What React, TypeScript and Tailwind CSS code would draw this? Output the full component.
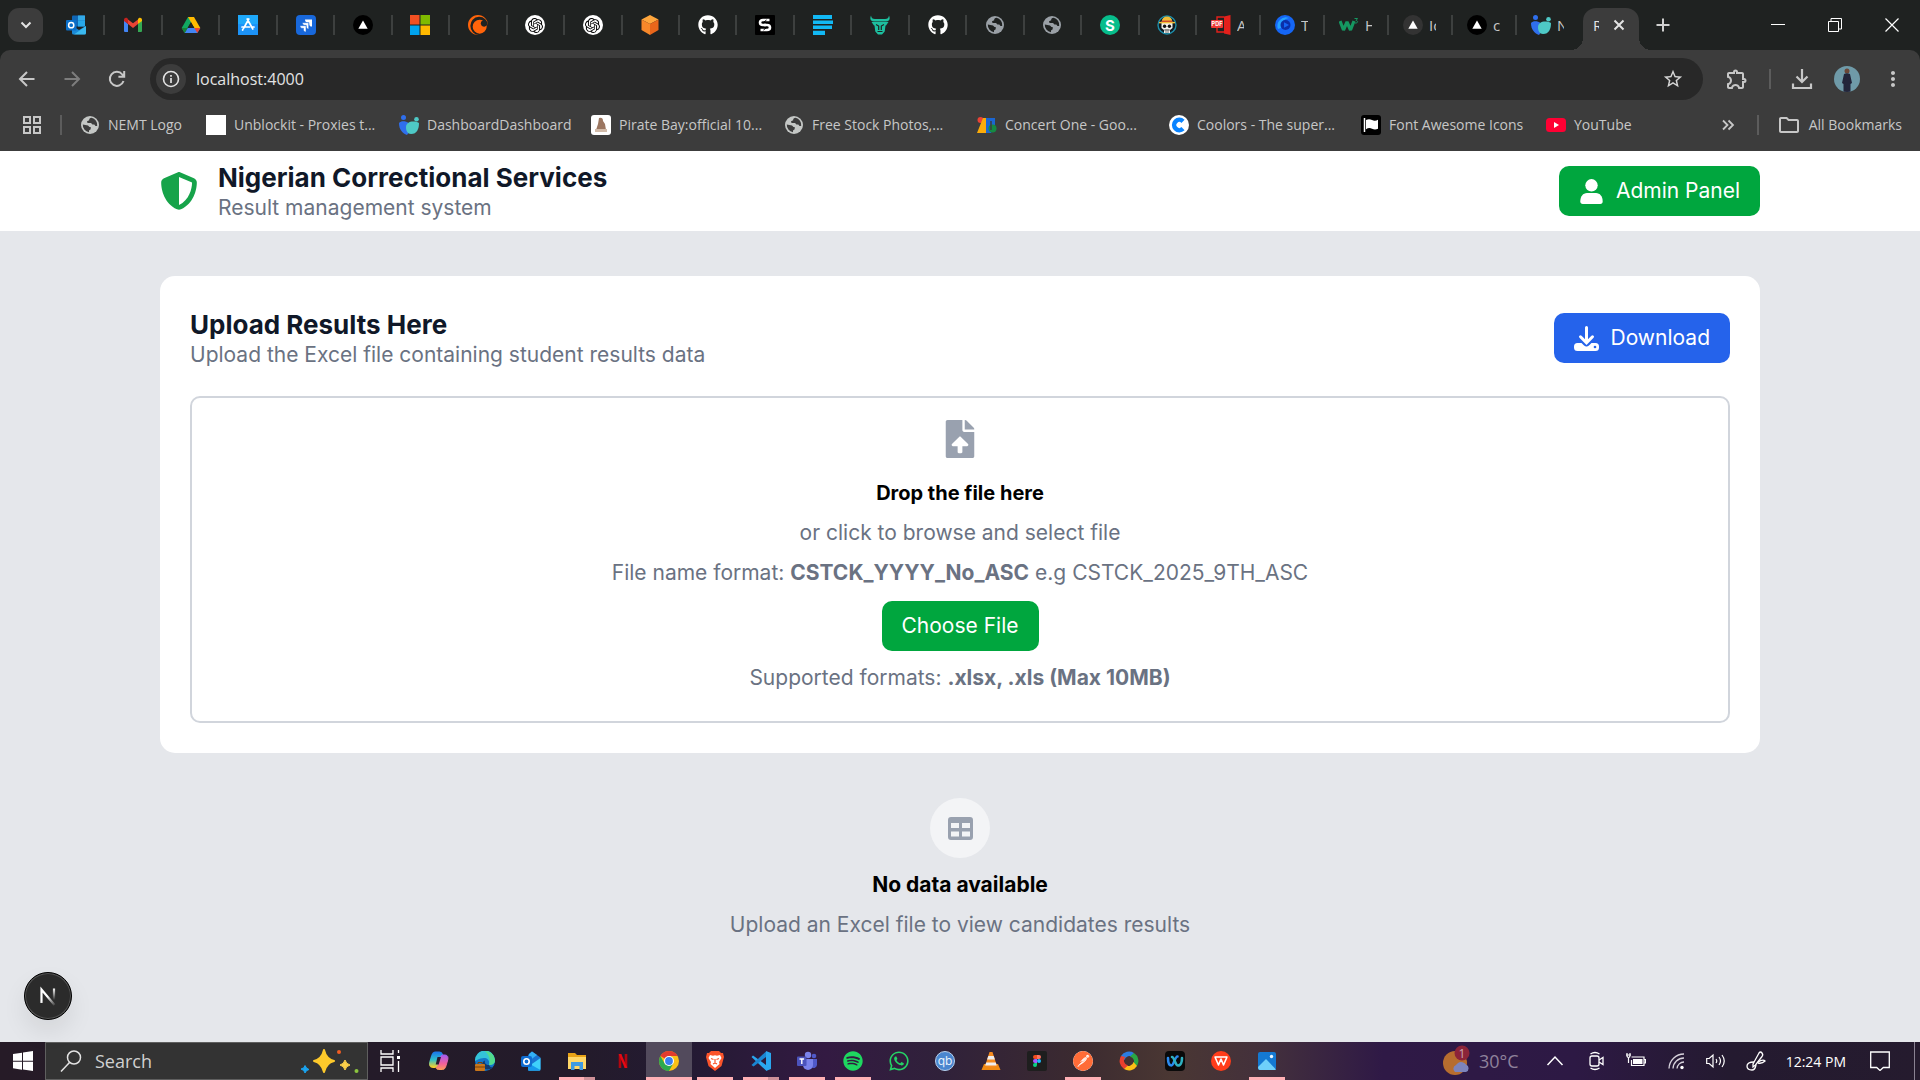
import React from "react";
import { FaGithub, FaWhatsapp, FaSpotify, FaShieldHalved } from "react-icons/fa6";
import { FaFileUpload } from "react-icons/fa";
import { MdStarOutline, MdOutlineExtension, MdMoreVert, MdOutlineFolder } from "react-icons/md";
import { SiOpenai, SiCrunchyroll, SiPostman } from "react-icons/si";

type Kids = { children: React.ReactNode };

const Svg = ({ children, box = 20, cls = "size-5" }: Kids & { box?: number; cls?: string }) => (
  <svg viewBox={`0 0 ${box} ${box}`} className={`${cls} shrink-0`} fill="none" aria-hidden="true">
    {children}
  </svg>
);

const Outlook = () => (
  <Svg>
    <rect x="6" y="0.5" width="13" height="11" rx="1" fill="#1066b5" />
    <rect x="12" y="0.5" width="7" height="5" fill="#32a9e7" />
    <rect x="12" y="5.5" width="7" height="6" fill="#28a8ea" />
    <path d="M6 11 13 15 20 11V18a1.500 1.500 0 0 1-1.500 1.500H7.500A1.500 1.500 0 0 1 6 18Z" fill="#1b8ad8" />
    <path d="M20 11 8 19.500h10.500A1.500 1.500 0 0 0 20 18Z" fill="#50d9ff" opacity=".6" />
    <rect x="0" y="5" width="10.500" height="10.500" rx="1" fill="#0a6fc9" />
    <circle cx="5.200" cy="10.200" r="2.600" stroke="#fff" strokeWidth="1.500" />
  </Svg>
);
const NewOutlook = () => (
  <Svg>
    <path d="m11 .5 8.500 6V18a1.500 1.500 0 0 1-1.500 1.500H7V4Z" fill="#1a73d0" />
    <path d="m11 .5 5 3.500-8 6V3Z" fill="#33b1f5" />
    <path d="M19.500 7 8 15v4.500h10a1.500 1.500 0 0 0 1.500-1.500Z" fill="#3fd0fb" />
    <path d="m7 12 12.500 7q-.5.500-1.500.500H7Z" fill="#1698ec" />
    <rect x="0" y="5" width="11" height="11" rx="2" fill="#0f6cd0" />
    <circle cx="5.500" cy="10.500" r="2.700" stroke="#fff" strokeWidth="1.600" />
  </Svg>
);
const Gmail = () => (
  <Svg>
    <path d="M1 4.500V16a1 1 0 0 0 1 1h3V9Z" fill="#4285f4" />
    <path d="M19 4.500V16a1 1 0 0 1-1 1h-3V9Z" fill="#34a853" />
    <path d="M5 9V4.500L10 8.300 15 4.500V9L10 13Z" fill="#ea4335" />
    <path d="M1 5.500V4.800C1 3 3 2.300 4.300 3.300L5 4v5L1 6Z" fill="#c5221f" />
    <path d="M19 5.500v-.7C19 3 17 2.300 15.700 3.300L15 4v5l4-3Z" fill="#fbbc04" />
  </Svg>
);
const Drive = () => (
  <Svg>
    <path d="M7 2h6l-9.300 16L.7 13Z" fill="#11a861" />
    <path d="M7 2h6l6.300 11h-6Z" fill="#ffba00" />
    <path d="M3.700 18 6.600 13h12.700l-3 5Z" fill="#4285f4" />
    <path d="M10 7.200 6.600 13h6.700Z" fill="#1f2221" />
    <path d="m13.300 13 3 5 3-5Z" fill="#ea4335" />
    <path d="m.7 13 3 5 2.900-5Z" fill="#188038" />
  </Svg>
);
const AppStore = () => (
  <Svg>
    <rect width="20" height="20" fill="#1c93f7" />
    <rect width="20" height="9" fill="#1fb6fb" opacity=".6" />
    <path d="m10.800 4-5 9M9.200 4l5.600 10M4 12h7.500M13.500 12H16M5 14.200l-.4.800" stroke="#fff" strokeWidth="1.700" strokeLinecap="round" />
  </Svg>
);
const Jira = () => (
  <Svg>
    <rect width="20" height="20" rx="4" fill="#1868db" />
    <path d="M9 4.500h7v7c-1.800 0-2.800-1-2.800-2.600v-1.400h-1.500C10 7.500 9 6.200 9 4.500Z" fill="#fff" />
    <path d="M6.400 7.700h6.300v6.300c-1.600 0-2.500-1-2.500-2.400v-1.300H8.900c-1.500 0-2.500-1.100-2.500-2.600Z" fill="#fff" stroke="#1868db" strokeWidth=".5" />
    <path d="M4 10.700h6V17c-1.600 0-2.500-1-2.500-2.400v-1.300H6.400C5 13.300 4 12.200 4 10.700Z" fill="#fff" stroke="#1868db" strokeWidth=".5" />
  </Svg>
);
const Vercel = ({ bg = "#000" }: { bg?: string }) => (
  <Svg>
    <circle cx="10" cy="10" r="10" fill={bg} />
    <path d="M10 5.500 14.700 13.700H5.300Z" fill="#fff" />
  </Svg>
);
const Microsoft = () => (
  <Svg>
    <path d="M0 0h9.500v9.500H0Z" fill="#f25022" />
    <path d="M10.500 0H20v9.500h-9.500Z" fill="#7fba00" />
    <path d="M0 10.500h9.500V20H0Z" fill="#00a4ef" />
    <path d="M10.500 10.500H20V20h-9.500Z" fill="#ffb900" />
  </Svg>
);
const OpenAi = () => (
  <span className="flex size-5 items-center justify-center rounded-full bg-white">
    <SiOpenai className="size-[15px] text-black" />
  </span>
);
const Box = () => (
  <Svg>
    <path d="m10 0 8.500 4.500L10 9 1.500 4.500Z" fill="#ffa63d" />
    <path d="M1.500 4.500 10 9v11l-8.500-5Z" fill="#f7882a" />
    <path d="M18.500 4.500 10 9v11l8.500-5Z" fill="#e8661b" />
  </Svg>
);
const Knot = () => (
  <Svg>
    <rect width="20" height="20" rx="1" fill="#000" />
    <path d="M14.500 5H8Q5 5 5 7.500T8 10h3" stroke="#fff" strokeWidth="2.600" />
    <path d="M5.500 15H12q3 0 3-2.500T12 10H9" stroke="#fff" strokeWidth="2.600" />
    <path d="m8.500 7.500 3-2.500M8.500 15l3-2.500" stroke="#000" strokeWidth="1" />
  </Svg>
);
const Bars = () => (
  <Svg>
    <path d="M0 0h19v4H0ZM0 5.500h20v3.500H0ZM0 10.500h19v3.500H0ZM0 15.700h12V20H0Z" fill="#12b9f5" />
  </Svg>
);
const Bull = () => (
  <Svg>
    <path d="M1 .5C-.5 4 .5 6.500 4 6.500h12C19.500 6.500 20.500 4 19 .500c-.3 2.500-1.500 3.500-4 3.500H5C2.500 4 1.300 3 1 .5ZM1.500 7 4 10.500h.5l.8 6L8 19.500h4l2.700-3 .8-6h.5L18.500 7Z" fill="#1dbf9f" />
    <path d="M6 9.500 8.700 11v4M14 9.500 11.300 11v4M7.500 16.500h5" stroke="#1f2221" strokeWidth="1.200" />
  </Svg>
);
const LetterDisc = () => (
  <Svg>
    <circle cx="10" cy="10" r="10" fill="#07bd8b" />
    <text x="10" y="15.500" textAnchor="middle" fontSize="15" fontWeight="700" fill="#fff" fontFamily="Inter, sans-serif">S</text>
  </Svg>
);
const Pirate = () => (
  <Svg>
    <circle cx="10" cy="10" r="9" fill="#101a20" stroke="#1d8ca8" strokeWidth="1.400" />
    <path d="M4.500 8a5.500 6 0 0 1 11 0v5l-2.500 2v3H7v-3l-2.500-2Z" fill="#f2f2ee" />
    <path d="M5 6a5 4.500 0 0 1 10 0Z" fill="#f0bd38" />
    <path d="M4.800 5.600h10.400v2H4.800Z" fill="#c9382b" />
    <path d="M2 7.600h16" stroke="#f0bd38" strokeWidth="1.500" />
    <circle cx="7.600" cy="11.200" r="1.700" fill="#111" />
    <circle cx="12.400" cy="11.200" r="1.700" fill="#111" />
    <path d="M7 15h6M9 14v4M11 14v4" stroke="#555" strokeWidth=".8" />
  </Svg>
);
const Pdf = () => (
  <Svg>
    <path d="M13 1.500 19.500 0v20L13 18.500Z" fill="#e3201b" />
    <path d="M6 5V2h7M6 13v4h7" stroke="#e3201b" strokeWidth="1.400" />
    <rect x="0" y="5" width="12" height="8" rx="1" fill="#ef3a36" />
    <text x="6" y="11.200" textAnchor="middle" fontSize="5.500" fontWeight="700" fill="#fff" fontFamily="Inter, sans-serif">PDF</text>
  </Svg>
);
const BlueDisc = () => (
  <Svg>
    <circle cx="10" cy="10" r="10" fill="#1566f5" />
    <path d="M3 14A8.500 8.500 0 0 1 14 3a9 9 0 0 0-8 10Z" fill="#25a2ff" />
    <circle cx="10.500" cy="10" r="5" fill="#0b2fa8" />
    <path d="m9 7.300 5 2.700-5 2.700Z" fill="#1566f5" />
  </Svg>
);
const W3 = () => (
  <Svg>
    <path d="m1 6 3.500 9L8 7l3.500 8L15 6" stroke="#159761" strokeWidth="3.200" strokeLinejoin="bevel" />
    <path d="M15.500 3.500h3L17 5.500c2.500.200 2 3-1 2.500" stroke="#159761" strokeWidth="1" />
  </Svg>
);
const Twins = () => (
  <Svg>
    <circle cx="4.500" cy="2.500" r="2.500" fill="#2f6fed" />
    <circle cx="17.500" cy="4.300" r="2.300" fill="#4ec9c6" />
    <path d="M0 8c2-2.500 7-2 9.500 0L11 16l-3 4C3 18 0 14 0 8Z" fill="#2f6fed" />
    <path d="M7 12c0-5 7-7 13-4 0 6-2 11-8 11-3.500 0-5-3-5-7Z" fill="#4ec9c6" />
  </Svg>
);
const Globe = ({ tone = "#9aa0a6", ground = "#1f2221" }: { tone?: string; ground?: string }) => (
  <Svg>
    <circle cx="10" cy="10" r="9" fill={tone} />
    <path d="M11.500 2.800C10 3 9 3.800 9.200 5.200L7 6.200 7.500 8H11l1.500 1.500h1.800L15.500 11h1.700a7.300 7.300 0 0 0-5.700-8.200Z" fill={ground} />
    <path d="M2.800 9.500 8 10.500 9.500 12h1.200v2.200L9 15.500v1.700A7.300 7.300 0 0 1 2.800 9.500Z" fill={ground} />
  </Svg>
);

const iconTabs: [string, React.ReactNode][] = [
  ["Outlook", <Outlook />],
  ["Gmail", <Gmail />],
  ["Drive", <Drive />],
  ["App Store", <AppStore />],
  ["Jira", <Jira />],
  ["Vercel", <Vercel />],
  ["Microsoft", <Microsoft />],
  ["Crunchyroll", <SiCrunchyroll className="size-5 text-[#ff640a]" />],
  ["ChatGPT", <OpenAi />],
  ["ChatGPT", <OpenAi />],
  ["Packages", <Box />],
  ["GitHub", <FaGithub className="size-5 text-white" />],
  ["Knot", <Knot />],
  ["Bars", <Bars />],
  ["Bull", <Bull />],
  ["GitHub", <FaGithub className="size-5 text-white" />],
  ["Site", <Globe />],
  ["Site", <Globe />],
  ["S", <LetterDisc />],
  ["Pirate", <Pirate />],
];

const textTabs: [string, React.ReactNode][] = [
  ["A", <Pdf />],
  ["T", <BlueDisc />],
  ["H", <W3 />],
  ["Ic", <Vercel bg="#333" />],
  ["c", <Vercel />],
  ["N", <Twins />],
];

function TabStrip() {
  return (
    <div className="flex h-[50px] items-center bg-[#1f2221]">
      <button aria-label="Search tabs" className="mr-[5px] ml-2 flex h-[34px] w-[35px] items-center justify-center rounded-[11px] bg-[#3c3c3c]">
        <Svg cls="size-5"><path d="m5.500 7.500 4.500 4.500 4.500-4.500" stroke="#e3e3e3" strokeWidth="2" /></Svg>
      </button>
      <div className="flex min-w-0 flex-1">
        {iconTabs.map(([name, icon], i) => (
          <button key={i} aria-label={name} className="flex h-5 min-w-0 flex-1 items-center justify-center border-r-2 border-[#3d403f]">
            {icon}
          </button>
        ))}
      </div>
      {textTabs.map(([name, icon], i) => (
        <button key={i} className={`flex h-5 w-16 shrink-0 items-center gap-1.5 pl-3.5 text-[15px] text-[#c7c7c7] ${i < 5 ? "border-r-2 border-[#3d403f]" : ""}`}>
          {icon}
          <span className="w-[7px] overflow-hidden text-left whitespace-nowrap">{name}</span>
        </button>
      ))}
      <div className="relative mt-2 ml-0.5 flex h-[42px] w-14 shrink-0 items-center gap-3.5 rounded-t-[13px] bg-[#3c3c3c] pb-2 pl-[10px] text-[15px] text-[#e3e3e3]">
        <span className="absolute bottom-0 -left-3 size-3 bg-[radial-gradient(circle_at_0_0,#1f2221_12px,#3c3c3c_12px)]" />
        <span className="absolute -right-3 bottom-0 size-3 bg-[radial-gradient(circle_at_100%_0,#1f2221_12px,#3c3c3c_12px)]" />
        <span className="w-[6px] overflow-hidden">R</span>
        <button aria-label="Close tab">
          <Svg box={12} cls="size-3"><path d="m1.500 1.500 9 9m0-9-9 9" stroke="#e3e3e3" strokeWidth="2" /></Svg>
        </button>
      </div>
      <button aria-label="New tab" className="ml-4 shrink-0">
        <Svg box={16} cls="size-4"><path d="M8 1.500v13M1.500 8h13" stroke="#d0d0d0" strokeWidth="2" /></Svg>
      </button>
      <div className="ml-[78px] flex shrink-0 items-center">
        <button aria-label="Minimize" className="flex w-[57px] justify-center">
          <Svg box={14} cls="size-3.5"><path d="M0 6.500h14" stroke="#fff" /></Svg>
        </button>
        <button aria-label="Restore" className="flex w-[57px] justify-center">
          <Svg box={14} cls="size-3.5"><path d="M.5 3.500h10v10H.5ZM3 3.500v-3h10.500V11h-3" stroke="#fff" /></Svg>
        </button>
        <button aria-label="Close" className="flex w-[57px] justify-center">
          <Svg box={14} cls="size-3.5"><path d="m.5.5 13 13m0-13-13 13" stroke="#fff" strokeWidth="1.200" /></Svg>
        </button>
      </div>
    </div>
  );
}

function Toolbar() {
  return (
    <div className="flex h-[58px] items-center pr-[15px] pl-[17px]">
      <button aria-label="Back" className="mr-[25px]">
        <Svg><path d="M17.500 10H3m7-7-7 7 7 7" stroke="#c7c7c7" strokeWidth="2" /></Svg>
      </button>
      <button aria-label="Forward" className="mr-[25px]">
        <Svg><path d="M2.500 10H17m-7-7 7 7-7 7" stroke="#7d7d7d" strokeWidth="2" /></Svg>
      </button>
      <button aria-label="Reload" className="mr-[23px]">
        <Svg><path d="M16.500 12a7 7 0 1 1-1.200-6.500L17 7.500M17.200 2v5.800h-5.800" stroke="#c7c7c7" strokeWidth="2" /></Svg>
      </button>
      <div className="flex h-[42px] flex-1 items-center rounded-full bg-[#282828] pr-[19px] pl-1.5">
        <button aria-label="Site information" className="mr-2.5 flex size-[30px] items-center justify-center rounded-full bg-[#3c3c3c]">
          <Svg>
            <circle cx="10" cy="10" r="7.500" stroke="#e3e3e3" strokeWidth="1.600" />
            <path d="M10 9v5M10 6v1.700" stroke="#e3e3e3" strokeWidth="1.700" />
          </Svg>
        </button>
        <input aria-label="Address" defaultValue="localhost:4000" className="min-w-0 flex-1 bg-transparent text-[16px] text-[#e3e3e3] outline-none" />
        <button aria-label="Bookmark this tab"><MdStarOutline className="size-[22px] text-[#d5d5d5]" /></button>
      </div>
      <button aria-label="Extensions" className="ml-[22px]"><MdOutlineExtension className="size-6 text-[#c7c7c7]" /></button>
      <span className="mx-5 h-5 w-0.5 bg-[#5c5c5c]" />
      <button aria-label="Downloads">
        <Svg box={22} cls="size-[22px]"><path d="M11 1v13m-5.500-5.500L11 14l5.500-5.500M2 15.500V20h18v-4.500" stroke="#c7c7c7" strokeWidth="2.200" /></Svg>
      </button>
      <button aria-label="Profile" className="mx-[21px]">
        <Svg box={26} cls="size-[26px] rounded-full">
          <rect width="26" height="26" fill="#6f9aa8" />
          <circle cx="13" cy="5" r="2.500" fill="#6b4636" />
          <path d="M10 8q3-1.500 6 0l2 9-1.500 1v8H9.500v-8L8 17Z" fill="#23253a" />
        </Svg>
      </button>
      <button aria-label="Menu"><MdMoreVert className="size-6 text-[#c7c7c7]" /></button>
    </div>
  );
}

const bookmarks: [string, React.ReactNode, string][] = [
  ["NEMT Logo", <Globe tone="#c4c7c5" ground="#3c3c3c" />, "w-[126px]"],
  ["Unblockit - Proxies t...", <span className="size-5 shrink-0 bg-white" />, "w-[193px]"],
  ["DashboardDashboard", <Twins />, "w-[192px]"],
  ["Pirate Bay:official 10...", <Svg><rect width="20" height="20" rx="3" fill="#fff" /><path d="M8 3q4-1 4 3l2 3 1 6H5l2-6Z" fill="#9b7660" /><path d="M4 14h12v3H4Z" fill="#d2bba9" /></Svg>, "w-[193px]"],
  ["Free Stock Photos,...", <Globe tone="#c4c7c5" ground="#3c3c3c" />, "w-[193px]"],
  ["Concert One - Goo...", <Svg><circle cx="3.500" cy="5" r="3" fill="#ea4335" /><path d="M6 18H0L6 3h4v15Z" fill="#fbab09" /><path d="M9 3h9v7l-4 8H9Z" fill="#1b66d2" /><circle cx="15.500" cy="13.500" r="4" fill="#158a43" /><path d="M14 6v9" stroke="#3c3c3c" strokeWidth="1.500" /></Svg>, "w-[192px]"],
  ["Coolors - The super...", <Svg><circle cx="10" cy="10" r="10" fill="#fff" /><path d="M14 6.300a5.200 5.200 0 1 0 0 7.400" stroke="#0a84ff" strokeWidth="4.500" /></Svg>, "w-[192px]"],
  ["Font Awesome Icons", <span className="flex size-5 shrink-0 items-center justify-center rounded-[3px] bg-black"><Svg box={16} cls="size-4"><path d="M1.500 1v14" stroke="#fff" strokeWidth="1.500" /><path d="M3 3q3-1.500 6 0t6-.3v9q-3 1.500-6 0t-6 .5Z" fill="#fff" /></Svg></span>, "w-[185px]"],
  ["YouTube", <Svg><rect y="3" width="20" height="14" rx="3.500" fill="#ff0033" /><path d="m8 7 5 3-5 3Z" fill="#fff" /></Svg>, "w-[120px]"],
];

function Bookmarks() {
  return (
    <nav className="flex h-[43px] items-center pr-[18px] pb-2.5 pl-[22px] text-[14px] text-[#c7c7c7]">
      <button aria-label="Apps">
        <Svg><path d="M2 2h6v6H2ZM12 2h6v6h-6ZM2 12h6v6H2ZM12 12h6v6h-6Z" stroke="#c7c7c7" strokeWidth="2" /></Svg>
      </button>
      <span className="mr-[18px] ml-[18px] h-5 w-0.5 shrink-0 bg-[#5c5c5c]" />
      <div className="flex min-w-0 flex-1 overflow-hidden">
        {bookmarks.map(([name, icon, width]) => (
          <a key={name} href="#" className={`flex shrink-0 items-center gap-2 whitespace-nowrap ${width}`}>
            {icon}
            {name}
          </a>
        ))}
      </div>
      <button aria-label="More bookmarks">
        <Svg box={14} cls="size-3.5"><path d="m2 2.500 4.500 4.500L2 11.500m5.500-9L12 7l-4.500 4.500" stroke="#c7c7c7" strokeWidth="1.800" /></Svg>
      </button>
      <span className="mr-[18px] ml-[22px] h-5 w-0.5 shrink-0 bg-[#5c5c5c]" />
      <a href="#" className="flex shrink-0 items-center gap-2 whitespace-nowrap">
        <MdOutlineFolder className="size-6" />
        All Bookmarks
      </a>
    </nav>
  );
}

function SiteHeader() {
  return (
    <header className="bg-white px-40">
      <div className="mx-auto flex h-20 max-w-[1600px] items-center justify-between">
        <div className="flex items-center gap-5">
          <FaShieldHalved className="size-[38px] text-[#16a34a]" />
          <div className="pt-1">
            <h1 className="text-[26px] leading-[30px] font-bold text-[#101828]">Nigerian Correctional Services</h1>
            <p className="text-[21px] leading-[30px] text-[#6a7282]">Result management system</p>
          </div>
        </div>
        <button className="flex h-[50px] items-center gap-3 rounded-[10px] bg-[#00a63e] px-5 text-[21px] text-white">
          <Svg box={25} cls="size-[25px]">
            <circle cx="12.500" cy="6.300" r="6.200" fill="#fff" />
            <path d="M1.300 22.500C1.300 17.500 4 14 8 14h9c4 0 6.700 3.500 6.700 8.500 0 1.500-.9 2.500-2.400 2.500H3.700c-1.500 0-2.400-1-2.400-2.500Z" fill="#fff" />
          </Svg>
          Admin Panel
        </button>
      </div>
    </header>
  );
}

function UploadCard() {
  return (
    <section className="mx-auto max-w-[1600px] rounded-[15px] bg-white p-[30px]">
      <div className="flex items-center justify-between pb-[26px]">
        <div className="pt-1">
          <h2 className="text-[26px] leading-[30px] font-bold text-[#101828]">Upload Results Here</h2>
          <p className="text-[21px] leading-[30px] text-[#6a7282]">Upload the Excel file containing student results data</p>
        </div>
        <button className="flex h-[50px] items-center gap-3 rounded-[10px] bg-[#2563eb] px-5 text-[21px] text-white">
          <Svg box={25} cls="size-[25px]">
            <path d="M3.500 17h4l2.300 2.200a3.900 3.900 0 0 0 5.400 0l2.300-2.200h4A3.500 3.500 0 0 1 25 20.500v1A3.500 3.500 0 0 1 21.500 25h-18A3.500 3.500 0 0 1 0 21.500v-1A3.500 3.500 0 0 1 3.500 17Z" fill="#fff" />
            <path d="M12.500 1.500v15m-6-5.700 6 6 6-6" stroke="#2563eb" strokeWidth="5" strokeLinecap="round" />
            <path d="M12.500 1.500v15m-6-5.700 6 6 6-6" stroke="#fff" strokeWidth="3" strokeLinecap="round" />
            <circle cx="21" cy="21" r="1.300" fill="#2563eb" />
          </Svg>
          Download
        </button>
      </div>
      <div className="flex flex-col items-center rounded-[10px] border-2 border-gray-300 px-5 pt-[22px] pb-7 text-center text-[21px] leading-[30px] text-[#6a7282]">
        <FaFileUpload className="mb-5 size-[38px] text-[#99a1af]" />
        <h3 className="mb-2.5 text-[20px] font-bold text-black">Drop the file here</h3>
        <p className="mb-2.5">or click to browse and select file</p>
        <p className="mb-[13px]">
          File name format: <strong>CSTCK_YYYY_No_ASC</strong> e.g CSTCK_2025_9TH_ASC
        </p>
        <button className="mb-3 h-[50px] rounded-[10px] bg-[#00a63e] px-5 text-white">Choose File</button>
        <p>
          Supported formats: <strong>.xlsx, .xls (Max 10MB)</strong>
        </p>
      </div>
    </section>
  );
}

function EmptyState() {
  return (
    <section className="mt-[45px] flex flex-col items-center text-center text-[21px] leading-[30px]">
      <div className="mb-3 flex size-[60px] items-center justify-center rounded-full bg-gray-100">
        <Svg box={25} cls="size-[25px]">
          <path fillRule="evenodd" d="M3 1h19a3 3 0 0 1 3 3v17a3 3 0 0 1-3 3H3a3 3 0 0 1-3-3V4a3 3 0 0 1 3-3ZM3 7v5h8V7Zm11 0v5h8V7ZM3 15.500v5h8v-5Zm11 0v5h8v-5Z" fill="#99a1af" />
        </Svg>
      </div>
      <h3 className="mb-2.5 font-bold text-black">No data available</h3>
      <p className="text-[#6a7282]">Upload an Excel file to view candidates results</p>
    </section>
  );
}

const TaskView = () => (
  <Svg box={22} cls="size-[22px]">
    <path d="M2 0v4h12V0M2 22v-4h12v4M2 7h12v8H2ZM19.500 0v3M19.500 11v11" stroke="#fff" strokeWidth="1.300" />
    <path d="M18 6h3v3h-3Z" fill="#fff" />
  </Svg>
);
const Copilot = () => (
  <Svg>
    <defs>
      <linearGradient id="pilot-a" x1="0" y1="0" x2="0" y2="1">
        <stop stopColor="#1b7bea" />
        <stop offset=".5" stopColor="#2fc0c8" />
        <stop offset="1" stopColor="#f2cf2e" />
      </linearGradient>
      <linearGradient id="pilot-b" x1="0" y1="0" x2="0" y2="1">
        <stop stopColor="#a25cf0" />
        <stop offset=".6" stopColor="#f2609a" />
        <stop offset="1" stopColor="#fb9a5c" />
      </linearGradient>
    </defs>
    <path d="M13 3.500C12.600 2.200 12 1.500 10.500 1.500H6.500C4.500 1.500 3.700 3 3 5.200L1.300 11c-.8 3 .2 5 2.700 5h2c1.500 0 2-.7 2.500-2.200L10.500 7c.5-2 1-3 2.500-3.500Z" stroke="url(#pilot-a)" strokeWidth="2" fill="url(#pilot-a)" />
    <path d="M7 16.500c.4 1.300 1 2 2.500 2h4c2 0 2.800-1.500 3.500-3.700L18.700 9c.8-3-.2-5-2.700-5h-2c-1.500 0-2 .7-2.500 2.200L9.500 13c-.5 2-1 3-2.500 3.500Z" fill="url(#pilot-b)" stroke="url(#pilot-b)" />
    <path d="m8.500 6-1.800 7.500h3L12 6Z" fill="#2a1a30" />
  </Svg>
);
const Edge = () => (
  <Svg>
    <circle cx="10" cy="10" r="10" fill="#1476c8" />
    <path d="M0 10a10 10 0 0 1 20-1c0 4-3 5-6 5 1-4-1-7-5-7-5 0-8 3-9 3Z" fill="#34c3d8" />
    <path d="M10 0a10 10 0 0 1 10 9c0 4-3 5-6 5 2-5 0-10-4-14Z" fill="#52dc8c" />
    <path d="M14 14c-3 0-5-2-4-4.500-3 1-4 5-1 8 2.500 1.500 6 1.500 9-1.500-1.500.5-3 .5-4-2Z" fill="#123a6b" />
    <rect x="0" y="13" width="10" height="7" rx="1" fill="#c9761a" />
    <path d="M3 13v-1.500h4V13M0 16h10" stroke="#7a4106" />
  </Svg>
);
const Explorer = () => (
  <Svg>
    <path d="M1 2h7l2 2h9v14H1Z" fill="#e8a317" />
    <path d="M1 6h18v12H1Z" fill="#ffd767" />
    <path d="M4 19v-8h12v8h-3.500v-4h-5v4Z" fill="#3d9ae2" />
  </Svg>
);
const Netflix = () => (
  <Svg>
    <path d="M7 3v14M13 3v14" stroke="#b1060f" strokeWidth="2.600" />
    <path d="m5.700 3 2.600 0 6 14h-2.600Z" fill="#e50914" />
  </Svg>
);
const Chrome = () => (
  <Svg>
    <circle cx="10" cy="10" r="10" fill="#fbc116" />
    <path d="M10 10 1.340 5A10 10 0 0 1 18.660 5H10Z" fill="#e33b2e" />
    <path d="M1.340 5A10 10 0 0 0 10 20l4.300-7.500L5.700 12.500Z" fill="#2da94f" />
    <circle cx="10" cy="10" r="5" fill="#fff" />
    <circle cx="10" cy="10" r="3.900" fill="#3a7ff0" />
  </Svg>
);
const Brave = () => (
  <Svg>
    <path d="M6 0h8l2 2h2l1 4-2.500 9L10 20l-6.500-5L1 6l1-4h2Z" fill="#fb542b" />
    <path d="m5 4 3 .7 2-.5 2 .5 3-.7 1.500 3-2.500 4 .5 2-4.500 4L5.500 13l.5-2-2.500-4Z" fill="#fff" />
    <path d="m6 7.500 2.500 1M14 7.500l-2.500 1M10 8v4M8 13l2-1 2 1" stroke="#fb542b" strokeWidth="1.200" />
  </Svg>
);
const Code = () => (
  <Svg>
    <path d="M2 4.500.5 6 15 19.500V14ZM15 0l5 2v16l-5 2Z" fill="#2aa6ee" />
    <path d="M15 .5V6L2.500 15.500.5 14Z" fill="#1a86d3" />
  </Svg>
);
const Teams = () => (
  <Svg>
    <circle cx="11" cy="4" r="3.200" fill="#7b83eb" />
    <circle cx="17" cy="5" r="2.300" fill="#5059c9" />
    <path d="M13 8h7v6a3.500 3.500 0 0 1-6 2Z" fill="#5059c9" />
    <path d="M6 8h10v6a5 5 0 0 1-10 0Z" fill="#7b83eb" />
    <rect x="0" y="5.500" width="9.500" height="9.500" rx="1" fill="#4b53bc" />
    <path d="M2.500 8h4.600M4.800 8v5" stroke="#fff" strokeWidth="1.400" />
  </Svg>
);
const Qb = () => (
  <Svg>
    <circle cx="10" cy="10" r="9.500" fill="#4a86cf" stroke="#b8d1ee" />
    <text x="10" y="14" textAnchor="middle" fontSize="12" fill="#e6f0fb" fontFamily="Inter, sans-serif">qb</text>
  </Svg>
);
const Vlc = () => (
  <Svg>
    <path d="M3 13h14l2.500 6h-19Z" fill="#f08a12" />
    <path d="M8.500 1h3L16 15q-6 3-12 0Z" fill="#f58b1f" />
    <path d="M7.300 5h5.400l1.200 3.500H6.100ZM5.200 11.500h9.600l.9 3H4.200Z" fill="#eee" />
  </Svg>
);
const Figma = () => (
  <Svg>
    <rect width="20" height="20" rx="2" fill="#1e1e1e" />
    <path d="M8 4h2v4H8a2 2 0 0 1 0-4Z" fill="#f24e1e" />
    <path d="M10 4h2a2 2 0 0 1 0 4h-2Z" fill="#ff7262" />
    <path d="M8 8h2v4H8a2 2 0 0 1 0-4Z" fill="#a259ff" />
    <circle cx="12" cy="10" r="2" fill="#1abcfe" />
    <path d="M8 12h2v2a2 2 0 1 1-2-2Z" fill="#0acf83" />
  </Svg>
);
const Swirl = () => (
  <Svg>
    <path d="M2 5a9.500 9.500 0 0 1 13-3l-1 4.500A5 5 0 0 0 5.500 9Z" fill="#2b7de1" />
    <path d="M15 2a9.500 9.500 0 0 1 3 13l-4.500-1A5 5 0 0 0 11 5.500Z" fill="#29a745" />
    <path d="M18 15a9.500 9.500 0 0 1-13 3l1-4.500a5 5 0 0 0 8.500-2.500Z" fill="#fbbf16" />
    <path d="M5 18A9.500 9.500 0 0 1 2 5l4.500 1A5 5 0 0 0 9 14.500Z" fill="#e8402e" />
  </Svg>
);
const Webex = () => (
  <Svg>
    <rect width="20" height="20" rx="4" fill="#0a0a0a" />
    <path d="M3 7c0 5 1.500 7.500 3.500 7.500S10 5.500 12.500 5.500" stroke="#2a8af0" strokeWidth="2.600" strokeLinecap="round" />
    <path d="M7 6c2.500 0 3 8.500 6 8.500S17 10 17 7" stroke="#2fb0c0" strokeWidth="2.600" strokeLinecap="round" />
  </Svg>
);
const Wps = () => (
  <Svg>
    <circle cx="10" cy="10" r="10" fill="#ff3c1a" />
    <path d="M3.500 6h13M4 6l3.500 8L10 8l2.500 6L16 6" stroke="#fff" strokeWidth="1.600" strokeLinejoin="round" />
  </Svg>
);
const Photos = () => (
  <Svg>
    <rect x="1" y="1" width="18" height="18" rx="2" fill="#1479d2" />
    <path d="m1 16 8-8 10 10.500-1 .5H3c-1.300 0-2-1-2-3Z" fill="#6fd0fa" />
    <circle cx="14.500" cy="5.500" r="1.700" fill="#e8f6ff" />
  </Svg>
);

type Running = "no" | "yes" | "many" | "active";
const apps: [string, React.ReactNode, Running][] = [
  ["Copilot", <Copilot />, "no"],
  ["Edge", <Edge />, "no"],
  ["Outlook", <NewOutlook />, "no"],
  ["Explorer", <Explorer />, "many"],
  ["Netflix", <Netflix />, "no"],
  ["Chrome", <Chrome />, "active"],
  ["Brave", <Brave />, "yes"],
  ["Code", <Code />, "many"],
  ["Teams", <Teams />, "yes"],
  ["Spotify", <FaSpotify className="size-5 text-[#1ed760]" />, "yes"],
  ["WhatsApp", <FaWhatsapp className="size-[22px] text-[#25d366]" />, "no"],
  ["qBittorrent", <Qb />, "no"],
  ["VLC", <Vlc />, "no"],
  ["Figma", <Figma />, "no"],
  ["Postman", <SiPostman className="size-5 rounded-full bg-white text-[#ff6c37]" />, "yes"],
  ["Swirl", <Swirl />, "no"],
  ["Webex", <Webex />, "no"],
  ["WPS", <Wps />, "no"],
  ["Photos", <Photos />, "yes"],
];

function Taskbar() {
  return (
    <footer className="flex h-[38px] items-stretch bg-[linear-gradient(90deg,#261b27_0%,#231b2a_30%,#241a33_36%,#331a42_43%,#30213a_49%,#3b2a30_56%,#4a3733_61%,#43303c_66%,#2f1946_72%,#2d1944_82%,#241a30_90%,#251b2e_100%)]">
      <button aria-label="Start" className="flex w-[45px] items-center justify-center">
        <Svg><path d="m0 3 9-1.300v8H0ZM10 1.500 20 0v9.700H10ZM0 10.700h9v8L0 17.300ZM10 10.700h10V20l-10-1.500Z" fill="#fff" /></Svg>
      </button>
      <label className="flex w-[323px] items-center border border-[#5f5f5f] bg-[#333] pr-2 pl-3.5">
        <Svg box={22} cls="size-[22px]"><circle cx="14" cy="7.500" r="6.500" stroke="#e3e3e3" strokeWidth="1.500" /><path d="m9.500 12.500-8.500 9" stroke="#e3e3e3" strokeWidth="1.500" /></Svg>
        <input aria-label="Search" placeholder="Search" className="ml-[13px] min-w-0 flex-1 bg-transparent text-[18px] outline-none placeholder:text-[#d0d0d0]" />
        <svg viewBox="0 0 58 24" className="h-6 w-[58px]" fill="none" aria-hidden="true">
          <path d="M23 1q2 9 10 11-8 2-10 11-2-9-10-11 8-2 10-11Z" fill="#fdc92b" stroke="#fdc92b" strokeWidth="2" strokeLinejoin="round" />
          <path d="M44 11q1 4 5 5-4 1-5 5-1-4-5-5 4-1 5-5Z" fill="#fdd04a" stroke="#fdd04a" />
          <path d="M4 16.500q1 3 4 4-3 .5-4 3.500-.5-3-4-4 3.500-.5 4-3.500Z" fill="#1aa4f0" stroke="#1aa4f0" />
          <circle cx="38" cy="3" r="2" fill="#f25d22" />
          <circle cx="55.500" cy="22" r="2" fill="#8bc53f" />
        </svg>
      </label>
      <div className="flex">
        <button aria-label="Task view" className="flex w-12 items-center justify-center pr-1">
          <TaskView />
        </button>
        {apps.map(([name, icon, running]) => (
          <button key={name} aria-label={name} className={`relative flex w-[46px] items-center justify-center ${running === "active" ? "bg-[#524a5c]" : ""}`}>
            {icon}
            {running === "active" && <span className="absolute inset-x-0 bottom-0 h-[3px] bg-[#ffb0b5]" />}
            {running === "yes" && <span className="absolute inset-x-[5px] bottom-0 h-[3px] bg-[#ffb0b5]" />}
            {running === "many" && <span className="absolute inset-x-[5px] bottom-0 h-[3px] border-r-[11px] border-[#cf9199] bg-[#ffb0b5]" />}
          </button>
        ))}
      </div>
      <div className="ml-auto flex shrink-0 items-center text-white">
        <button className="mr-4 flex items-center gap-2 text-[18px] text-[#8f829b]">
          <svg viewBox="0 0 30 34" className="h-[34px] w-[30px]" fill="none" aria-hidden="true">
            <circle cx="14" cy="19" r="12" fill="#b76d2f" />
            <path d="M14 28a4 4 0 0 1 1-7 6 6 0 0 1 10-.5 4 4 0 0 1 0 7.500Z" fill="#7d84bb" />
            <circle cx="21" cy="9" r="7.500" fill="#8c2439" />
            <text x="21" y="13.500" textAnchor="middle" fontSize="12" fill="#c9a9b8" fontFamily="Open Sans, sans-serif">1</text>
          </svg>
          30°C
        </button>
        <button aria-label="Show hidden icons" className="flex w-[41px] justify-center"><Svg><path d="m2.500 14 7.500-8 7.500 8" stroke="#fff" strokeWidth="1.500" /></Svg></button>
        <button aria-label="Meet now" className="flex w-10 justify-center">
          <Svg><rect x="4" y="5" width="9" height="10" rx="2" stroke="#fff" strokeWidth="1.300" /><path d="m13 9 4-2.500v7L13 11M4.500 3q4.500-3 9 0M4.500 17q4.500 3 9 0" stroke="#fff" strokeWidth="1.300" /></Svg>
        </button>
        <button aria-label="Battery" className="flex w-10 justify-center">
          <Svg><path d="M5.500 6H18v8.500H5.500V9M18 8.500h1.500V12H18M0 4h5M1 2v2.500Q1 6.500 2.500 6.500T4 4.500V2M2.500 6.500V12" stroke="#fff" strokeWidth="1.200" /><path d="M7 8h9.500v5H7Z" fill="#fff" /></Svg>
        </button>
        <button aria-label="Network" className="flex w-10 justify-center">
          <Svg><path d="M3 17.500A15 15 0 0 1 18 3M7 17.500A11 11 0 0 1 18 7M11 17.500A7 7 0 0 1 18 11" stroke="#d8d3dd" strokeWidth="1.300" /><circle cx="16" cy="16.500" r="1.700" fill="#fff" /></Svg>
        </button>
        <button aria-label="Volume" className="flex w-10 justify-center">
          <Svg><path d="M.7 7.500h2.500L7 4v12l-3.800-3.500H.7Z" stroke="#fff" strokeWidth="1.200" /><path d="M10 8q1.500 2 0 4M13 6q3 4 0 8M16 4q4.500 6 0 12" stroke="#fff" strokeWidth="1.200" /></Svg>
        </button>
        <button aria-label="Pen" className="flex w-10 justify-center">
          <Svg><path d="m7 13 6-11q1.500-2 3 0t0 3.500L9.500 14 7 16Z" stroke="#fff" strokeWidth="1.300" /><path d="M12 11q5-3 7-1-3 3-7 2M8 11q-7 0-7 4t5 4q3 0 4-5" stroke="#fff" strokeWidth="1.300" /></Svg>
        </button>
        <span className="ml-2.5 text-[14px] whitespace-nowrap">12:24 PM</span>
        <button aria-label="Notifications" className="mx-6"><Svg><path d="M.7 1h18.600v15.500h-6L10 19.500l-3.300-3H.7Z" stroke="#fff" strokeWidth="1.300" /></Svg></button>
        <span className="mr-[5px] h-[38px] w-px bg-[#8a8292]" />
      </div>
    </footer>
  );
}

function DevBadge() {
  return (
    <button aria-label="Developer tools" className="absolute bottom-[22px] left-6 flex size-12 items-center justify-center rounded-full border border-black bg-[#2b2b2b] shadow-[0_12px_24px_rgba(0,0,0,0.08)] ring-1 ring-[#555] ring-inset">
      <svg viewBox="0 0 20 20" className="size-5" fill="none" aria-hidden="true">
        <defs>
          <linearGradient id="stem" x1="0" y1="2" x2="0" y2="14" gradientUnits="userSpaceOnUse"><stop stopColor="#fff" /><stop offset="1" stopColor="#fff" stopOpacity="0" /></linearGradient>
          <linearGradient id="diag" x1="10" y1="10" x2="17" y2="19" gradientUnits="userSpaceOnUse"><stop stopColor="#fff" /><stop offset="1" stopColor="#fff" stopOpacity="0.100" /></linearGradient>
        </defs>
        <path d="M3.500 17V3.500L16.500 19" stroke="url(#diag)" strokeWidth="2.200" />
        <path d="M16 2.500v12" stroke="url(#stem)" strokeWidth="2.200" />
      </svg>
    </button>
  );
}

export default function App() {
  return (
    <div className="flex min-h-screen flex-col bg-gray-200 font-['Inter',sans-serif]">
      <div className="bg-[#1f2221] font-['Open_Sans',sans-serif]">
        <TabStrip />
        <div className="rounded-t-[10px] bg-[#3c3c3c]">
          <Toolbar />
          <Bookmarks />
        </div>
      </div>
      <SiteHeader />
      <main className="relative flex-1 px-40 pt-[45px]">
        <UploadCard />
        <EmptyState />
        <DevBadge />
      </main>
      <div className="font-['Open_Sans',sans-serif]">
        <Taskbar />
      </div>
    </div>
  );
}
